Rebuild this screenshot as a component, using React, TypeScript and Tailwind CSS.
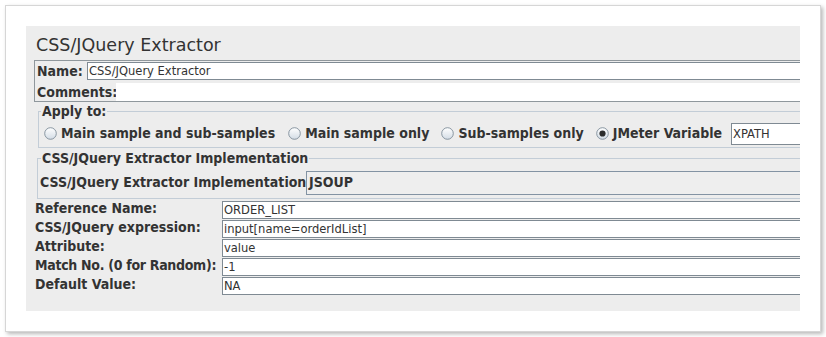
import React from "react";

const font = { fontFamily: '"DejaVu Sans", "Liberation Sans", sans-serif' };
const cond = { fontFamily: '"DejaVu Sans Condensed", "DejaVu Sans", sans-serif', fontStretch: "condensed" };

function Radio({ checked }: { checked?: boolean }) {
  return (
    <svg width="13" height="13" viewBox="0 0 13 13" className="shrink-0">
      <defs>
        <linearGradient id={checked ? "rg1" : "rg0"} x1="0" y1="0" x2="0" y2="1">
          <stop offset="0" stopColor="#ffffff" />
          <stop offset="1" stopColor="#d3dce5" />
        </linearGradient>
      </defs>
      <circle cx="6.5" cy="6.5" r="5.8" fill={`url(#${checked ? "rg1" : "rg0"})`} stroke="#7d8b97" strokeWidth="0.9" />
      {checked && <circle cx="6.5" cy="6.5" r="3.1" fill="#2c2c2c" />}
    </svg>
  );
}

function RadioItem({ label, checked, className = "" }: { label: string; checked?: boolean; className?: string }) {
  return (
    <div className={`flex shrink-0 items-center gap-[4px] ${className}`}>
      <Radio checked={checked} />
      <span style={cond} className="whitespace-nowrap text-[14px] font-bold text-[#333]">{label}</span>
    </div>
  );
}

function Field({ value }: { value: string }) {
  return (
    <div style={cond} className="h-[18px] w-[800px] shrink-0 border border-[#7f8a93] bg-white pl-[1px] text-[12.8px] leading-[16px] text-[#333]">
      {value}
    </div>
  );
}

const rows = [
  { label: "Reference Name:", value: "ORDER_LIST", tight: false },
  { label: "CSS/JQuery expression:", value: "input[name=orderIdList]", tight: false },
  { label: "Attribute:", value: "value", tight: false },
  { label: "Match No. (0 for Random):", value: "-1", tight: true },
  { label: "Default Value:", value: "NA", tight: false },
];

export default function App() {
  return (
    <div className="h-[337px] w-[826px] bg-white pl-[5px] pt-[5px]" style={font}>
      <div className="h-[327px] w-[816px] border border-[#d6d6d6] bg-white pl-[20px] pt-[20px] shadow-[2px_2px_4px_rgba(0,0,0,0.28)]">
        <div className="h-[285px] w-[774px] overflow-hidden bg-[#ededed]">
          <div className="w-[1100px]">
            {/* title */}
            <div className="mb-[4px] pl-[10px] pt-[8px] text-[17.5px] leading-[22px] text-[#333]">
              CSS/JQuery Extractor
            </div>

            {/* name / comments */}
            <div className="ml-[8px] border-y border-l border-[#8f979c]">
              <div className="flex h-[21px] items-start pt-[1px]">
                <span style={cond} className="w-[52px] shrink-0 whitespace-nowrap pl-[2px] text-[14px] font-bold leading-[18px] text-[#333]">Name:</span>
                <Field value="CSS/JQuery Extractor" />
              </div>
              <div className="flex h-[19px] items-end">
                <span style={cond} className="w-[81px] shrink-0 self-center whitespace-nowrap pl-[2px] text-[14px] font-bold leading-[18px] text-[#333]">Comments:</span>
                <div className="h-[18px] w-[900px] shrink-0 bg-white" />
              </div>
            </div>

            {/* apply to */}
            <fieldset className="ml-[12px] mt-[1px] border-y border-l border-[#c3cdd7]">
              <legend style={cond} className="ml-[2px] px-[1px] text-[14px] font-bold leading-[17px] text-[#333]">Apply to:</legend>
              <div className="flex h-[27px] items-center pl-[5px]">
                <RadioItem label="Main sample and sub-samples" />
                <RadioItem label="Main sample only" className="ml-[13px]" />
                <RadioItem label="Sub-samples only" className="ml-[12px]" />
                <RadioItem label="JMeter Variable" checked className="ml-[12px]" />
                <div style={cond} className="ml-[9px] h-[22px] w-[150px] shrink-0 border border-[#7f8a93] bg-white pl-[1px] text-[12.8px] leading-[20px] text-[#333]">
                  XPATH
                </div>
              </div>
            </fieldset>

            {/* implementation */}
            <fieldset className="ml-[11px] mt-[2px] border-y border-l border-[#c3cdd7]">
              <legend style={cond} className="ml-[3px] whitespace-nowrap px-[1px] text-[14px] font-bold leading-[17px] text-[#333]">
                CSS/JQuery Extractor Implementation
              </legend>
              <div className="flex h-[31px] items-center pl-[2px]">
                <span style={cond} className="w-[266px] shrink-0 whitespace-nowrap text-[14px] font-bold text-[#333]">CSS/JQuery Extractor Implementation</span>
                <div style={cond} className="flex h-[24px] w-[800px] shrink-0 items-center border border-[#8393a3] bg-[#eeeeee] pl-[2px] text-[14px] font-bold text-[#333]">
                  JSOUP
                </div>
              </div>
            </fieldset>

            {/* bottom fields */}
            <div className="mt-[1px] flex flex-col">
              {rows.map((r) => (
                <div key={r.label} className="flex h-[19px] items-start pt-[1px]">
                  <span
                    style={cond}
                    className={`w-[196px] shrink-0 whitespace-nowrap pl-[9px] text-[14px] font-bold leading-[15px] text-[#333] ${r.tight ? "tracking-[-0.3px]" : ""}`}
                  >
                    {r.label}
                  </span>
                  <Field value={r.value} />
                </div>
              ))}
            </div>
          </div>
        </div>
      </div>
    </div>
  );
}
